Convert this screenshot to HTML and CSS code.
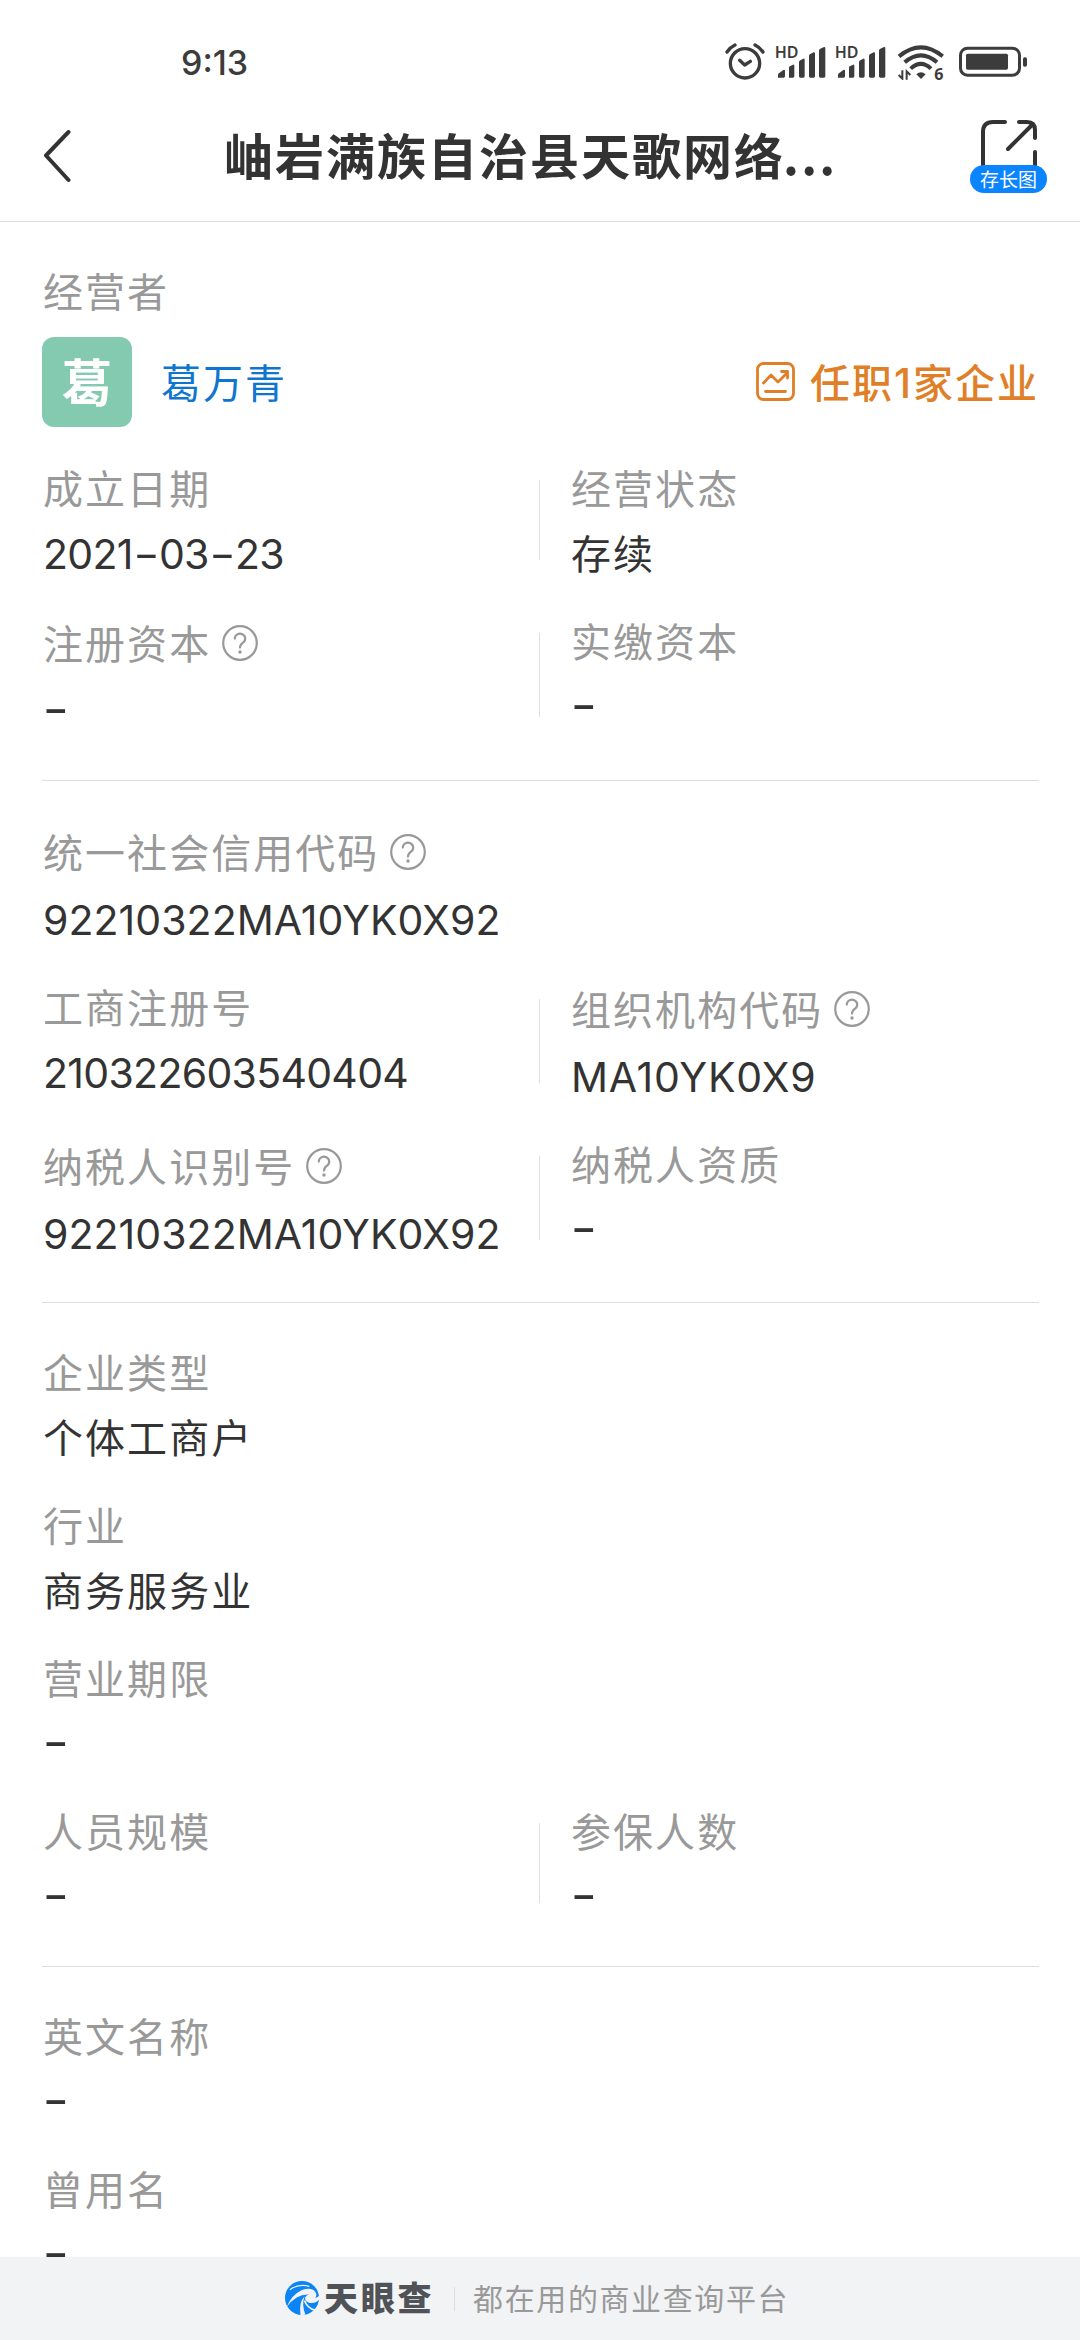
FILE: index.html
```html
<!DOCTYPE html>
<html lang="zh-CN">
<head>
<meta charset="utf-8">
<title>岫岩满族自治县天歌网络...</title>
<link rel="stylesheet" href="styles.css">
</head>
<body>
<svg class="defs" width="0" height="0">
  <symbol id="help" viewBox="0 0 36 36">
    <circle cx="18" cy="18" r="16.8" fill="none" stroke="currentColor" stroke-width="2.200"/>
    <path d="M12.8 13.6a5.2 4.9 0 1 1 8.2 4c-1.900 1.300-3 2.400-3 5" fill="none" stroke="currentColor" stroke-width="2.200" stroke-linecap="round"/>
    <circle cx="18" cy="27" r="1.7" fill="currentColor"/>
  </symbol>
  <symbol id="signal" viewBox="220 40 154 110">
    <path d="M229 144v-8q0-4 4-6l12-9q5-2 5 3v16q0 4-4 4zM262 144v-30q0-4 4-5l8-4q4-1 4 4v31q0 4-4 4h-8zM292 140v-42q0-4 4-6l9-5q4-1 4 4v49q0 4-4 4h-9q-4 0-4-4zM322 140v-61q0-4 4-6l10-5q4-1 4 4v68q0 4-4 4h-10q-4 0-4-4zM352 140v-77q0-4 4-6l11-5q4-1 4 4v84q0 4-4 4h-11q-4 0-4-4z"/>
  </symbol>
</svg>
<div class="screen">
  <div class="status">
    <span class="time">9:13</span>
    <div class="tray">
      <svg class="alarm" viewBox="70 40 120 110" fill="none" stroke="#3c3c3c" stroke-width="10" stroke-linecap="round" stroke-linejoin="round">
        <circle cx="130" cy="101" r="44"/><path d="M114 92l15 14 17-11M76 67q9-14 24-21M184 67q-9-14-24-21"/>
      </svg>
      <div class="cell">
        <svg class="signal" fill="#3c3c3c"><use href="#signal"/></svg>
        <span class="hd">HD</span>
      </div>
      <div class="cell second">
        <svg class="signal" fill="#3c3c3c"><use href="#signal"/></svg>
        <span class="hd">HD</span>
      </div>
      <div class="net">
        <svg class="wifi" viewBox="588 40 142 112" fill="none" stroke="#3c3c3c" stroke-width="12">
          <path d="M594 80q66-54 131 0M611 98q49-42 97 0M629 117q31-29 61 0"/>
          <path d="M646 134q14-12 28 0l-14 14z" fill="#3c3c3c" stroke="none"/>
          <path d="M604 122v25l-11-11M617 150v-25l11 11" stroke-width="6"/>
        </svg>
        <span class="six">6</span>
      </div>
      <svg class="battery" viewBox="774 40 206 110">
        <rect x="778.500" y="55.500" width="177" height="81" rx="21" fill="none" stroke="#3c3c3c" stroke-width="9"/>
        <rect x="795" y="72" width="126" height="48" rx="5" fill="#3c3c3c"/>
        <rect x="966" y="83" width="12" height="28" rx="5" fill="#3c3c3c"/>
      </svg>
    </div>
  </div>
  <header class="bar">
    <svg class="back" viewBox="0 0 28 54"><path d="M25.500 3L3 26.500 25.500 51" fill="none" stroke="#333" stroke-width="4" stroke-linecap="round" stroke-linejoin="round"/></svg>
    <h1 class="title">岫岩满族自治县天歌网络<span class="dots">...</span></h1>
    <div class="share">
      <svg class="share-icon" viewBox="0 0 56 46" fill="none" stroke="#333" stroke-width="4" stroke-linecap="round"><path d="M2 46V12Q2 2 12 2H24M38 2H46Q54 2 54 10V18M54 32V46M27 29L52 4"/></svg>
      <span class="pill">存长图</span>
    </div>
  </header>

  <main class="content">
    <section class="block">
      <div class="label">经营者</div>
      <div class="person">
        <span class="avatar">葛</span>
        <span class="name">葛万青</span>
        <span class="jobs">
          <svg class="jobs-icon" viewBox="0 0 39 39" fill="none" stroke="#e07f27" stroke-width="2.800" stroke-linecap="round" stroke-linejoin="round"><rect x="1.500" y="1.500" width="36" height="36" rx="6"/><path d="M7.500 21l7.500-8 7 7 9-9M25.500 9.500h6v6.500M9.500 29.500h20"/></svg>
          <span class="jobs-text">任职<span class="count">1</span>家企业</span>
        </span>
      </div>
      <div class="pair">
        <div class="field"><div class="label">成立日期</div><div class="value num digits">2021<span class="dash">-</span>03<span class="dash">-</span>23</div></div>
        <i class="rule"></i>
        <div class="field"><div class="label">经营状态</div><div class="value">存续</div></div>
      </div>
      <div class="pair">
        <div class="field"><div class="label tall">注册资本<svg class="help"><use href="#help"/></svg></div><div class="value num none">-</div></div>
        <i class="rule"></i>
        <div class="field"><div class="label">实缴资本</div><div class="value num none">-</div></div>
      </div>
    </section>

    <section class="block">
      <div class="field"><div class="label tall">统一社会信用代码<svg class="help"><use href="#help"/></svg></div><div class="value num">92210322MA10YK0X92</div></div>
      <div class="pair">
        <div class="field"><div class="label">工商注册号</div><div class="value num digits">210322603540404</div></div>
        <i class="rule"></i>
        <div class="field"><div class="label tall">组织机构代码<svg class="help"><use href="#help"/></svg></div><div class="value num code">MA10YK0X9</div></div>
      </div>
      <div class="pair">
        <div class="field"><div class="label tall">纳税人识别号<svg class="help"><use href="#help"/></svg></div><div class="value num">92210322MA10YK0X92</div></div>
        <i class="rule"></i>
        <div class="field"><div class="label">纳税人资质</div><div class="value num none">-</div></div>
      </div>
    </section>

    <section class="block">
      <div class="field"><div class="label">企业类型</div><div class="value">个体工商户</div></div>
      <div class="field"><div class="label">行业</div><div class="value">商务服务业</div></div>
      <div class="field"><div class="label">营业期限</div><div class="value num none">-</div></div>
      <div class="pair">
        <div class="field"><div class="label">人员规模</div><div class="value num none">-</div></div>
        <i class="rule"></i>
        <div class="field"><div class="label">参保人数</div><div class="value num none">-</div></div>
      </div>
    </section>

    <section class="block">
      <div class="field"><div class="label">英文名称</div><div class="value num none">-</div></div>
      <div class="field"><div class="label">曾用名</div><div class="value num none">-</div></div>
    </section>
  </main>

  <footer class="foot">
    <svg class="logo" viewBox="0 0 36 36">
      <circle cx="17.500" cy="17.500" r="17.500" fill="#0b84f5"/>
      <path d="M1.500 27Q7 14 17 9.500Q27 6 31 11Q33.500 14 31 17.500Q34 17 35.500 15V19Q31 23.500 25.500 22.500Q21 21.500 20.500 18Q21 15 25 14Q18 13.500 12 17Q6 20.500 1.500 27z" fill="#f2f3f5"/>
      <path d="M16 35.500Q14 22 20 16Q17 25 21 34.500z" fill="#f2f3f5"/>
      <path d="M20 20Q23 28 31 30" fill="none" stroke="#f2f3f5" stroke-width="1.800"/>
      <path d="M5 9Q14 2.500 25 5.500" fill="none" stroke="#f2f3f5" stroke-width="1.300"/>
    </svg>
    <span class="brand">天眼查</span>
    <i class="foot-rule"></i>
    <span class="slogan">都在用的商业查询平台</span>
  </footer>
</div>
</body>
</html>
```
FILE: styles.css
```css
* { box-sizing: border-box; }
body {
  margin: 0;
  background: #fff;
  font-family: "Noto Sans CJK SC", sans-serif;
  color: #333;
}
svg { display: block; flex: none; }
.defs { position: absolute; }
.screen {
  width: 1080px;
  height: 2340px;
  display: flex;
  flex-direction: column;
  overflow: hidden;
}

/* Status bar */
.status {
  height: 92px;
  padding: 43px 52px 0 181px;
  display: flex;
  justify-content: space-between;
  flex: none;
}
.time {
  font: 500 34px/42px Inter, sans-serif;
  height: 42px;
  margin-top: -1px;
  color: #3c3c3c;
}
.tray { display: flex; }
.alarm { width: 40px; height: 36.67px; margin-right: 10px; }
.cell, .net { position: relative; }
.cell { margin-right: 8.67px; }
.cell.second { margin-right: 11.33px; }
.signal { width: 51.33px; height: 36.67px; }
.net { margin-right: 14.67px; }
.wifi { width: 47.33px; height: 37.33px; }
.battery { width: 68.67px; height: 36.67px; }
.hd, .six {
  position: absolute;
  font: 600 16px/20px "Noto Sans", sans-serif;
  color: #3c3c3c;
}
.hd { left: 0; top: -1px; }
.six { left: 37px; top: 21px; font-weight: 700; }

/* Title bar */
.bar {
  height: 130px;
  flex: none;
  display: flex;
  align-items: flex-start;
  border-bottom: 1px solid #ddd;
  padding: 0 33px 0 43px;
}
.back { width: 28px; height: 54px; margin-top: 37px; }
.title {
  margin: 26px 0 0 153px;
  font-size: 49px;
  line-height: 72px;
  font-weight: 700;
  letter-spacing: 2px;
  white-space: nowrap;
}
.dots { letter-spacing: 2.200px; margin-left: -2px; }
.share {
  margin: 28px 0 0 auto;
  display: flex;
  flex-direction: column;
  align-items: center;
}
.share-icon { width: 56px; height: 46px; }
.pill {
  width: 77px;
  height: 28px;
  margin-top: -1px;
  border-radius: 14px;
  background: #0a84ff;
  color: #fff;
  font-size: 19px;
  line-height: 27px;
  text-align: center;
}

/* Company details */
.content {
  flex: 1;
  min-height: 0;
  overflow: hidden;
  padding: 42px 41px 0 42px;
}
.block {
  display: flex;
  flex-direction: column;
  gap: 32px;
}
.block + .block {
  margin-top: 40.500px;
  padding-top: 42px;
  border-top: 1px solid #ddd;
}
.label, .value {
  height: 56px;
  font-size: 40px;
  line-height: 53px;
  letter-spacing: 2.050px;
  padding-left: 1px;
  white-space: nowrap;
}
.label { color: #999; }
.label.tall {
  height: 60px;
  line-height: 57px;
  display: flex;
}
.value { margin-top: 9px; }
.num {
  font-family: Inter, sans-serif;
  font-size: 41px;
  line-height: 56px;
  letter-spacing: 0.050px;
}
.digits { letter-spacing: -0.700px; }
.code { letter-spacing: 0.800px; }
.none {
  width: 40px;
  font-weight: 500;
  line-height: 53px;
  transform: scaleX(1.400);
  transform-origin: 2px 50%;
}
.dash {
  display: inline-block;
  margin: 0 4px;
  transform: scaleX(1.400);
}
.help { width: 36px; height: 36px; margin: 11px 0 0 11px; }
.pair {
  display: grid;
  grid-template-columns: 497px 1px 1fr;
}
.pair .field:last-child { padding-left: 30px; }
.rule { background: #ddd; margin: 19px 0 22px; }
.person {
  display: flex;
  align-items: center;
  margin: -15px 0 2px;
}
.avatar {
  width: 90px;
  height: 90px;
  border-radius: 12px;
  background: #84cab1;
  color: #fff;
  font-size: 51px;
  font-weight: 700;
  line-height: 86px;
  text-align: center;
}
.name {
  margin-left: 29px;
  padding-bottom: 3px;
  font-size: 40px;
  line-height: 56px;
  letter-spacing: 2px;
  color: #0f76cf;
}
.jobs {
  margin-left: auto;
  padding-bottom: 2px;
  display: flex;
  align-items: center;
  gap: 15px;
  color: #e07f27;
}
.jobs-icon { width: 39px; height: 39px; }
.jobs-text {
  font-size: 40px;
  line-height: 54px;
  font-weight: 500;
  letter-spacing: 2px;
}
.count {
  font-family: Inter, sans-serif;
  font-size: 41px;
  line-height: 40px;
}

/* Footer */
.foot {
  height: 83px;
  flex: none;
  background: #f2f3f5;
  display: flex;
  align-items: center;
  padding-left: 285px;
}
.logo { width: 35px; height: 35px; }
.brand {
  margin-left: 4px;
  padding-bottom: 3px;
  font-size: 34px;
  line-height: 48px;
  font-weight: 900;
  letter-spacing: 2.700px;
  color: #4f5257;
}
.foot-rule { width: 1px; height: 24px; margin: 0 18px 0 20px; background: #ddd; }
.slogan {
  padding-bottom: 3px;
  font-size: 30px;
  line-height: 44px;
  letter-spacing: 1.600px;
  color: #999;
}
```
